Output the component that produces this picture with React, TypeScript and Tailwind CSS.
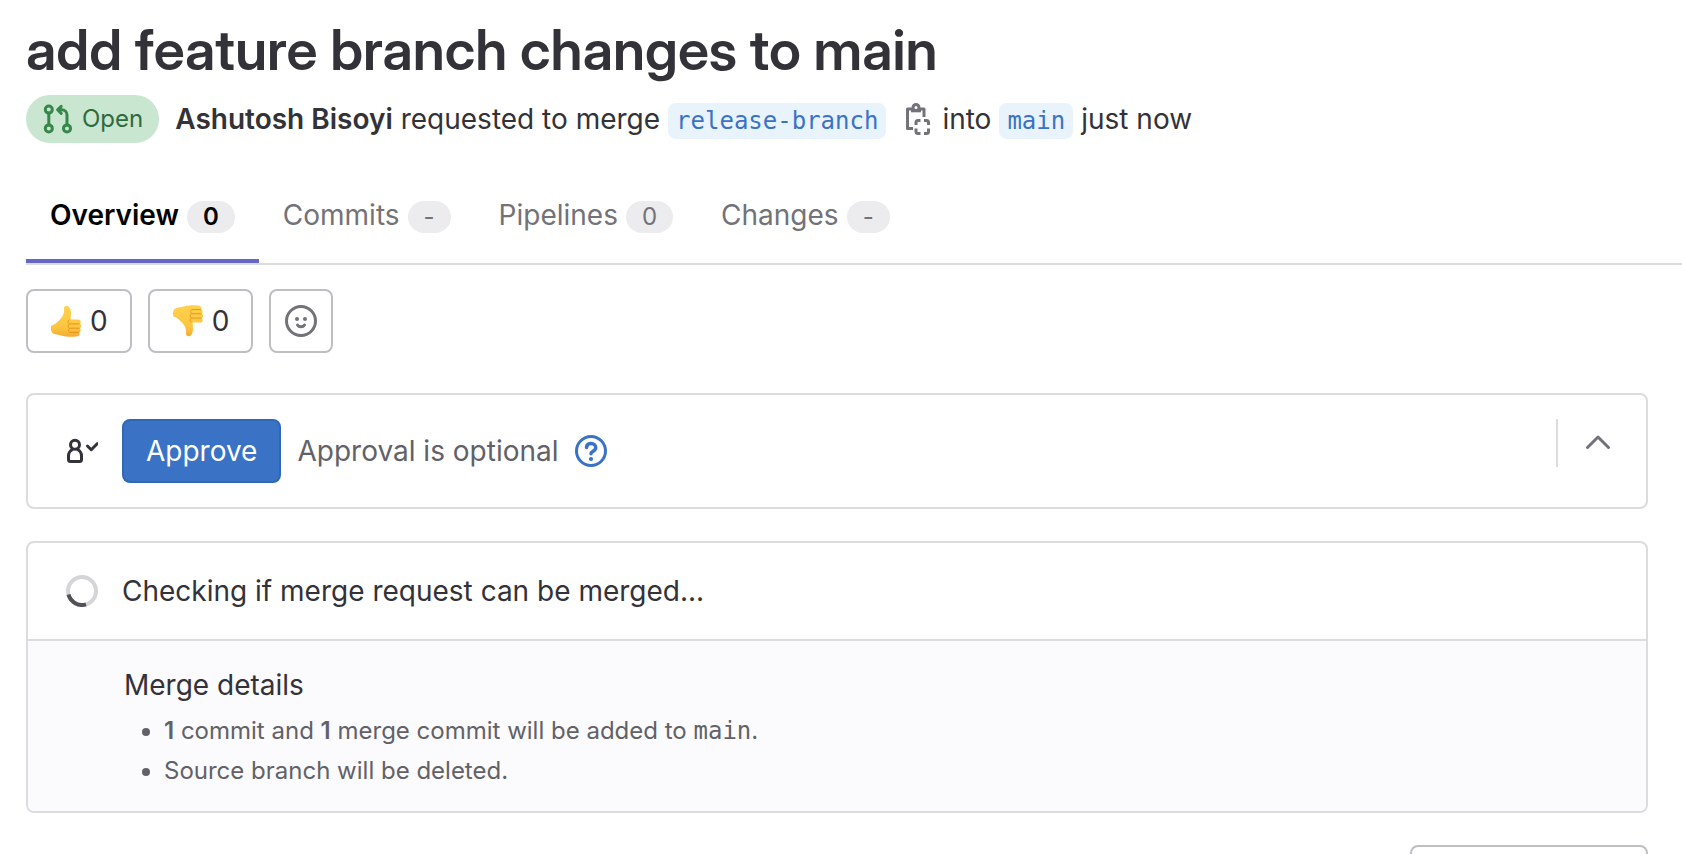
import type { ReactNode } from "react";

const MONO = "font-['DejaVu_Sans_Mono',monospace]";

function MergeRequestIcon() {
  return (
    <svg viewBox="0 0 16 16" className="size-8" fill="none" stroke="#37874a" strokeWidth="1.5" strokeLinecap="round" strokeLinejoin="round" aria-hidden="true">
      <circle cx="3.4" cy="3.3" r="1.75" />
      <circle cx="3.4" cy="12.7" r="1.75" />
      <circle cx="12.5" cy="12.7" r="1.75" />
      <path d="M3.4 5v6M12.5 11V6a2.6 2.6 0 0 0-2.6-2.6H8M9.6 1.7 7.8 3.4l1.8 1.8" />
    </svg>
  );
}

function CopyIcon() {
  return (
    <svg viewBox="0 0 32 32" className="size-8" fill="none" stroke="#737278" strokeWidth="3" strokeLinejoin="round" aria-hidden="true">
      <path d="M11 25.5H5.5V6H11M16.5 6H22v8" />
      <circle cx="14" cy="4.5" r="3" />
      <path d="M9 7.8h10" />
      <path d="M14 22v-2.5a2 2 0 0 1 2-2h2.500M22 17.5h2.500a2 2 0 0 1 2 2V22M26.5 25.500v3a2 2 0 0 1-2 2H22M18.500 30.5H16a2 2 0 0 1-2-2v-3" />
    </svg>
  );
}

function Thumb({ down = false }: { down?: boolean }) {
  const id = down ? "thumb-down" : "thumb-up";
  return (
    <svg viewBox="0 0 32 32" className={down ? "size-8 -scale-y-100" : "size-8"} aria-hidden="true">
      <defs>
        <linearGradient id={id} x1="0" y1={down ? "1" : "0"} x2="0" y2={down ? "0" : "1"}>
          <stop offset="0" stopColor="#ffd24d" />
          <stop offset="0.7" stopColor="#fdc540" />
          <stop offset="1" stopColor="#f3ab30" />
        </linearGradient>
      </defs>
      <path
        d="M14 3.5c0-1.800 1-2.800 2.600-2.800 2.200 0 3.700 2.300 4.200 5.300.4 2.600 0 5.500-.2 8.500h7.600c2.600 0 3.300 2.800 1.700 4.200 1.800 1.200 1.600 3.500 0 4.500 1.300 1.200 1 3.400-.6 4.200.8 2.400-.5 4-3.300 4.200-5 .5-10 .3-13.500-.8-3-.9-6-.9-9.500-2.300C1 26.500.6 24 1.300 20.500c3.500-.8 6-3 8.700-6C13 11.200 14.400 8.500 14 3.5Z"
        fill={"url(#" + id + ")"}
      />
      <path d="M19.5 14.800c-2 1-2 3.200 0 4.100h10M19.500 18.900c-1.800 1-1.800 3.300 0 4.300h10M19.800 23.200c-1.500 1-1.500 3.200 0 4.200h9.200" stroke="#e0901c" strokeWidth="0.9" fill="none" />
    </svg>
  );
}

function Smiley() {
  return (
    <svg viewBox="0 0 32 32" className="size-8" fill="none" stroke="#737278" strokeWidth="3" strokeLinecap="round" aria-hidden="true">
      <circle cx="16" cy="16" r="14.5" />
      <path d="M12.5 20c1.500 2.400 5.500 2.400 7 0" />
      <circle cx="12" cy="14" r="2" fill="#737278" stroke="none" />
      <circle cx="20" cy="14" r="2" fill="#737278" stroke="none" />
    </svg>
  );
}

function ApprovalIcon() {
  return (
    <svg viewBox="0 0 32 32" className="size-8" fill="none" stroke="#333238" strokeWidth="3" strokeLinecap="round" strokeLinejoin="round" aria-hidden="true">
      <circle cx="9" cy="9.8" r="4.5" />
      <path d="M6.5 14.5C3.800 15.800 2.500 18 2.500 21v3.500a2 2 0 0 0 2 2h9a2 2 0 0 0 2-2V21c0-3-1.300-5.200-4-6.500" />
      <path d="m21.500 11 3.700 3.700 6-6" />
    </svg>
  );
}

function HelpIcon() {
  return (
    <svg viewBox="0 0 32 32" className="size-8" fill="none" stroke="#3a72c6" strokeWidth="3" strokeLinecap="round" strokeLinejoin="round" aria-hidden="true">
      <circle cx="16" cy="16" r="14.5" />
      <path strokeWidth="3.5" d="M11.5 12.5c.2-2.400 2-3.900 4.500-3.900 2.600 0 4.700 1.600 4.700 4 0 2.300-1.500 3.200-3 4-1 .5-1.700 1-1.700 2.200" />
      <circle cx="16" cy="24" r="2.1" fill="#3a72c6" stroke="none" />
    </svg>
  );
}

function Spinner() {
  return (
    <svg viewBox="0 0 32 32" className="size-8" fill="none" strokeWidth="4" aria-hidden="true">
      <circle cx="16" cy="16" r="14" stroke="#d5d5d7" />
      <path d="M20 29.400A14 14 0 0 1 2.500 19.600" stroke="#535158" />
    </svg>
  );
}

function Tab({ label, count, active = false }: { label: string; count: string; active?: boolean }) {
  return (
    <a
      href={"#" + label.toLowerCase()}
      aria-current={active ? "page" : undefined}
      className={
        active
          ? "flex h-24 items-center gap-2 border-b-4 border-[#6666c4] px-6 pt-1 font-semibold text-black"
          : "flex h-24 items-center gap-2 border-b-4 border-transparent px-6 pt-1 text-[#737278]"
      }
    >
      {label}
      <span className="mt-1 h-8 rounded-full bg-[#ececef] px-4 text-2xl leading-8">{count}</span>
    </a>
  );
}

function Branch({ children }: { children: ReactNode }) {
  return (
    <a href="#branch" className={"mt-1 rounded-lg bg-[#e9f3fc] px-2 text-2xl leading-9 text-[#3a72c6] " + MONO}>
      {children}
    </a>
  );
}

export default function App() {
  return (
    <main className="flex h-screen flex-col overflow-hidden bg-white pl-[26px] font-[Inter,sans-serif] text-[28px] leading-10 text-[#333238] *:shrink-0">
      <h1 className="pt-[14px] font-['Inter_Display',Inter,sans-serif] text-[56px] leading-[72px] font-semibold">add feature branch changes to main</h1>
      <div className="mt-[9px] flex h-12 items-center gap-2 whitespace-nowrap">
        <span className="mr-2 flex h-12 items-center gap-2 rounded-full bg-[#c9e6d0] px-4 text-2xl text-[#2f6a3d]">
          <MergeRequestIcon />
          Open
        </span>
        <span>
          <strong className="font-semibold">Ashutosh Bisoyi</strong> requested to merge
        </span>
        <Branch>release-branch</Branch>
        <button type="button" aria-label="Copy branch name" className="ml-2">
          <CopyIcon />
        </button>
        <span>into</span>
        <Branch>main</Branch>
        <span>just now</span>
      </div>

      <nav aria-label="Merge request" className="mt-6 flex border-b-2 border-[#dcdcde]">
        <Tab label="Overview" count="0" active />
        <Tab label="Commits" count="-" />
        <Tab label="Pipelines" count="0" />
        <Tab label="Changes" count="-" />
      </nav>

      <div className="mt-6 flex gap-4">
        <button type="button" aria-label="Thumbs up 0" className="flex h-16 items-center gap-2 rounded-lg border-2 border-[#bfbfc3] px-[22px]">
          <Thumb />0
        </button>
        <button type="button" aria-label="Thumbs down 0" className="flex h-16 items-center gap-2 rounded-lg border-2 border-[#bfbfc3] px-[22px]">
          <Thumb down />0
        </button>
        <button type="button" aria-label="Add reaction" className="flex size-16 items-center justify-center rounded-lg border-2 border-[#bfbfc3]">
          <Smiley />
        </button>
      </div>

      <section className="mt-10 mr-[34px] flex items-start rounded-lg border-2 border-[#dcdcde] py-6 pr-8 pl-[38px]">
        <div className="flex flex-1 items-center">
          <ApprovalIcon />
          <button type="button" className="ml-6 h-16 rounded-lg border-2 border-[#2f68b4] bg-[#3a72c6] px-[22px] text-white">
            Approve
          </button>
          <span className="ml-4 text-[#626168]">Approval is optional</span>
          <a href="#help" aria-label="Help" className="ml-4">
            <HelpIcon />
          </a>
        </div>
        <div className="flex h-12 items-center border-l-2 border-[#dcdcde] pl-6">
          <button type="button" aria-label="Collapse" className="size-8">
            <svg viewBox="0 0 32 32" className="size-8" fill="none" stroke="#737278" strokeWidth="3" strokeLinecap="round" strokeLinejoin="round" aria-hidden="true">
              <path d="M5.500 20.500 16 10 26.500 20.500" />
            </svg>
          </button>
        </div>
      </section>

      <section className="mt-8 mr-[34px] overflow-hidden rounded-lg border-2 border-[#dcdcde]">
        <div className="flex h-24 items-center gap-6 px-[38px]">
          <Spinner />
          Checking if merge request can be merged...
        </div>
        <div className="border-t-2 border-[#dcdcde] bg-[#fbfafd] pt-6 pb-5 pl-24">
          <h2>Merge details</h2>
          <ul className="list-disc pt-[6px] pl-10 text-2xl leading-10 text-[#626168]">
            <li>
              <b className="font-semibold">1</b> commit and <b className="font-semibold">1</b> merge commit will be added to <span className={MONO}>main</span>.
            </li>
            <li>Source branch will be deleted.</li>
          </ul>
        </div>
      </section>

      <div className="mt-8 mr-[34px] h-16 w-[238px] self-end rounded-lg border-2 border-[#bfbfc3]" />
    </main>
  );
}
